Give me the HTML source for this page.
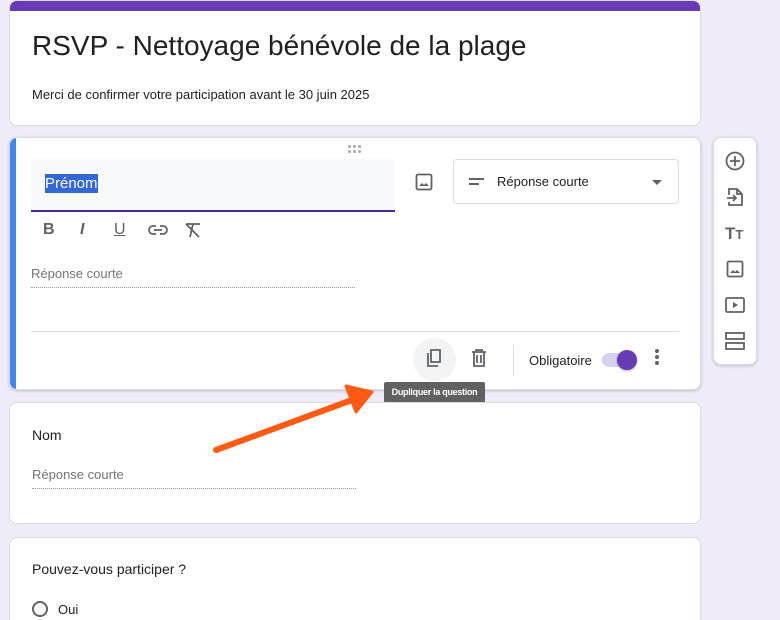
<!DOCTYPE html><html><head><style>
html,body{margin:0;width:780px;height:620px;overflow:hidden}
body{background:#f0ebf8;font-family:"Liberation Sans",Arial,sans-serif;position:relative;color:#202124}
.card{position:absolute;left:9px;width:692px;background:#fff;border:1px solid #dadce0;border-radius:8px;box-sizing:border-box;overflow:hidden}
.ab{position:absolute}
.ph{font-size:13px;color:#70757a}
.dot{position:absolute;border-bottom:1px dotted #9aa0a6;width:324px}
.d{position:absolute;width:3px;height:3px;background:#b0b0b0;border-radius:1px}
</style></head><body>
<div class="card" style="top:0;height:126px">
<div class="ab" style="left:0;top:0;width:100%;height:10px;background:#673ab7"></div>
<div class="ab" style="left:22px;top:29px;font-size:28px">RSVP - Nettoyage bénévole de la plage</div>
<div class="ab" style="left:22px;top:86px;font-size:13px">Merci de confirmer votre participation avant le 30 juin 2025</div>
</div>
<div class="card" style="top:137px;height:253px;box-shadow:0 1px 3px rgba(0,0,0,.2)">
<div class="ab" style="left:0;top:0;width:6px;height:100%;background:#4285f4"></div>
<div class="d" style="left:338px;top:7px"></div><div class="d" style="left:343px;top:7px"></div><div class="d" style="left:348px;top:7px"></div>
<div class="d" style="left:338px;top:12px"></div><div class="d" style="left:343px;top:12px"></div><div class="d" style="left:348px;top:12px"></div>
<div class="ab" style="left:21px;top:21px;width:364px;height:51px;background:#f8f9fa;border-bottom:2px solid #4a2a8a"></div>
<div class="ab" style="left:35px;top:36px;background:#3367d6;color:#fff;font-size:15px;padding:1px 0">Prénom</div>
<div class="ab" style="left:33px;top:83px;font-size:16px;color:#5f6368;font-weight:bold">B</div>
<div class="ab" style="left:70px;top:83px;font-size:16px;color:#5f6368;font-style:italic;font-weight:bold">I</div>
<div class="ab" style="left:104px;top:83px;font-size:16px;color:#5f6368;text-decoration:underline">U</div>
<svg class="ab" style="left:138px;top:84px" width="20" height="16" viewBox="0 0 20 16"><path d="M8 4H5a4 4 0 000 8h3M12 4h3a4 4 0 010 8h-3M6 8h8" stroke="#5f6368" stroke-width="1.8" fill="none"/></svg>
<svg class="ab" style="left:174px;top:84px" width="18" height="16" viewBox="0 0 18 16"><path d="M2 2h14M9 2l-3 13M2 2l13 13" stroke="#5f6368" stroke-width="1.8" fill="none"/></svg>
<div class="ab ph" style="left:21px;top:128px">Réponse courte</div>
<div class="dot" style="left:21px;top:149px"></div>
<svg class="ab" style="left:405px;top:35px" width="18" height="18" viewBox="0 0 18 18"><rect x="1.5" y="1.5" width="15" height="15" rx="1.5" stroke="#5f6368" stroke-width="1.8" fill="none"/><path d="M4 13l3-3 2 2 2-2 3 3z" fill="#5f6368"/></svg>
<div class="ab" style="left:443px;top:21px;width:226px;height:45px;border:1px solid #dadce0;border-radius:4px;box-sizing:border-box"></div>
<div class="ab" style="left:459px;top:40px;width:15px;height:2px;background:#5f6368"></div>
<div class="ab" style="left:459px;top:45px;width:10px;height:2px;background:#5f6368"></div>
<div class="ab" style="left:487px;top:36px;font-size:13px">Réponse courte</div>
<div class="ab" style="left:642px;top:42px;border:5px solid transparent;border-top-color:#5f6368"></div>
<div class="ab" style="left:21px;top:193px;width:648px;height:1px;background:#dadce0"></div>
<div class="ab" style="left:403px;top:200px;width:43px;height:43px;border-radius:50%;background:#f1f3f4"></div>
<svg class="ab" style="left:414px;top:210px" width="20" height="20" viewBox="0 0 20 20"><path d="M7 2h9v12H7zM4 5v13h10" stroke="#5f6368" stroke-width="1.8" fill="none"/></svg>
<svg class="ab" style="left:460px;top:210px" width="18" height="20" viewBox="0 0 18 20"><path d="M2 4h14M6 4V2h6v2M4 4v14h10V4M7 7v8M11 7v8" stroke="#5f6368" stroke-width="1.8" fill="none"/></svg>
<div class="ab" style="left:503px;top:208px;width:1px;height:30px;background:#dadce0"></div>
<div class="ab" style="left:519px;top:215px;font-size:13px">Obligatoire</div>
<div class="ab" style="left:592px;top:215px;width:34px;height:14px;border-radius:7px;background:#d9d0ee"></div>
<div class="ab" style="left:607px;top:212px;width:20px;height:20px;border-radius:50%;background:#673ab7;box-shadow:0 1px 2px rgba(0,0,0,.3)"></div>
<div class="ab" style="left:645px;top:211px;width:4px;font-size:0">
<div style="width:4px;height:4px;border-radius:2px;background:#5f6368;margin-bottom:2px"></div><div style="width:4px;height:4px;border-radius:2px;background:#5f6368;margin-bottom:2px"></div><div style="width:4px;height:4px;border-radius:2px;background:#5f6368"></div></div>
</div>
<div class="ab" style="left:384px;top:382px;width:101px;height:21px;background:#616161;color:#fff;font-size:9px;font-weight:bold;line-height:21px;text-align:center;border-radius:2px;letter-spacing:-0.3px">Dupliquer la question</div>
<div class="card" style="top:402px;height:122px">
<div class="ab" style="left:22px;top:24px;font-size:14px">Nom</div>
<div class="ab ph" style="left:22px;top:64px">Réponse courte</div>
<div class="dot" style="left:22px;top:85px"></div>
</div>
<div class="card" style="top:537px;height:100px">
<div class="ab" style="left:22px;top:23px;font-size:14px">Pouvez-vous participer ?</div>
<div class="ab" style="left:22px;top:63px;width:16px;height:16px;border:2px solid #5f6368;border-radius:50%;box-sizing:border-box"></div>
<div class="ab" style="left:48px;top:64px;font-size:13px">Oui</div>
</div>
<div class="ab" style="left:713px;top:137px;width:44px;height:228px;background:#fff;border:1px solid #dadce0;border-radius:8px;box-sizing:border-box;box-shadow:0 1px 3px rgba(0,0,0,.2)">
<svg class="ab" style="left:11px;top:13px" width="20" height="20" viewBox="0 0 20 20"><circle cx="10" cy="10" r="8.5" stroke="#5f6368" stroke-width="1.8" fill="none"/><path d="M10 5v10M5 10h10" stroke="#5f6368" stroke-width="1.8"/></svg>
<svg class="ab" style="left:12px;top:49px" width="18" height="20" viewBox="0 0 18 20"><path d="M3 8V2h8l5 5v11H3v-3M11 2v5h5M1 11h9M7 8l3 3-3 3" stroke="#5f6368" stroke-width="1.8" fill="none"/></svg>
<div class="ab" style="left:11px;top:86px;font-size:17px;font-weight:bold;color:#5f6368">T<span style="font-size:13px">T</span></div>
<svg class="ab" style="left:12px;top:122px" width="18" height="18" viewBox="0 0 18 18"><rect x="1.5" y="1.5" width="15" height="15" rx="1.5" stroke="#5f6368" stroke-width="1.8" fill="none"/><path d="M4 13l3-3 2 2 2-2 3 3z" fill="#5f6368"/></svg>
<svg class="ab" style="left:11px;top:159px" width="20" height="16" viewBox="0 0 20 16"><rect x="1" y="1" width="18" height="14" rx="1.5" stroke="#5f6368" stroke-width="1.8" fill="none"/><path d="M8 5v6l5-3z" fill="#5f6368"/></svg>
<svg class="ab" style="left:11px;top:194px" width="20" height="18" viewBox="0 0 20 18"><rect x="1" y="1" width="18" height="6" stroke="#5f6368" stroke-width="1.8" fill="none"/><rect x="1" y="11" width="18" height="6" stroke="#5f6368" stroke-width="1.8" fill="none"/></svg>
</div>
<svg class="ab" style="left:0;top:0" width="780" height="620"><path d="M216 450L352 400" stroke="#ff5a14" stroke-width="6" stroke-linecap="round"/><path d="M372 392L346 386L356 412Z" fill="#ff5a14" stroke="#ff5a14" stroke-width="3" stroke-linejoin="round"/></svg>
</body></html>
